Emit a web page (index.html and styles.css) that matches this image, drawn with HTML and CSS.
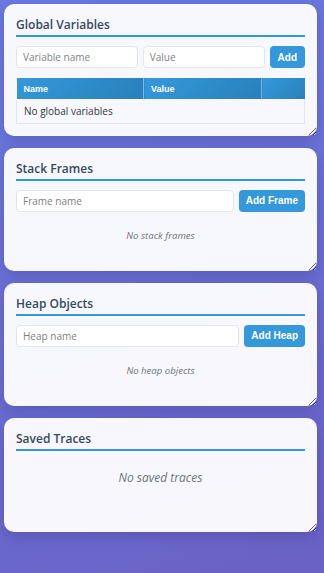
FILE: index.html
```html
<!DOCTYPE html>
<html>
<head>
<meta charset="utf-8">
<link rel="stylesheet" href="styles.css">
</head>
<body>
<main class="panels">
  <section class="card card-globals">
    <h3 class="card-title">Global Variables</h3>
    <div class="form-row">
      <input class="field field-half" type="text" placeholder="Variable name">
      <input class="field field-half" type="text" placeholder="Value">
      <button class="btn btn-small">Add</button>
    </div>
    <table class="vars">
      <thead>
        <tr><th class="col-name">Name</th><th class="col-value">Value</th><th class="col-act"></th></tr>
      </thead>
      <tbody>
        <tr><td colspan="3">No global variables</td></tr>
      </tbody>
    </table>
  </section>

  <section class="card">
    <h3 class="card-title">Stack Frames</h3>
    <div class="form-row">
      <input class="field" type="text" placeholder="Frame name">
      <button class="btn">Add Frame</button>
    </div>
    <div class="empty">No stack frames</div>
  </section>

  <section class="card">
    <h3 class="card-title">Heap Objects</h3>
    <div class="form-row">
      <input class="field" type="text" placeholder="Heap name">
      <button class="btn">Add Heap</button>
    </div>
    <div class="empty">No heap objects</div>
  </section>

  <section class="card card-traces">
    <h3 class="card-title">Saved Traces</h3>
    <div class="empty empty-large">No saved traces</div>
  </section>
</main>
</body>
</html>
```
FILE: styles.css
```css
* { box-sizing: border-box; }
html, body { margin: 0; padding: 0; }
body {
  min-height: 100vh;
  background: linear-gradient(160deg, #6b7be3 0%, #6a6ed2 55%, #6a62c4 100%);
  font-family: "Open Sans", "Liberation Sans", sans-serif;
  color: #2c3e50;
}
.panels {
  display: flex;
  flex-direction: column;
  gap: 12px;
  padding: 4px 7px 4px 4px;
}
.card {
  background: rgba(255, 255, 255, 0.95);
  border-radius: 10px;
  padding: 12px;
  box-shadow: 0 4px 14px rgba(40, 30, 110, 0.25);
  resize: vertical;
  overflow: auto;
}
.card-title {
  margin: 0 0 9px;
  font-size: 12px;
  font-weight: 600;
  line-height: 18px;
  padding-bottom: 1px;
  border-bottom: 2px solid #3498db;
  color: #34495e;
}
.form-row {
  display: flex;
  gap: 5px;
  align-items: stretch;
}
.field {
  flex: 1;
  min-width: 0;
  height: 22px;
  border: 1px solid #e2e5ea;
  border-radius: 4px;
  background: #fff;
  padding: 0 6px;
  font-family: "Open Sans", sans-serif;
  font-size: 10px;
  color: #333;
}
.field::placeholder { color: #7c7f84; }
.btn {
  flex: none;
  height: 22px;
  border: none;
  border-radius: 4px;
  background: #3498db;
  color: #fff;
  font-family: "Liberation Sans", Arial, sans-serif;
  font-weight: bold;
  font-size: 10px;
  padding: 0 7px;
}
.btn-small { padding: 0 8px; }
.vars {
  width: 100%;
  margin-top: 10px;
  border-collapse: collapse;
  font-size: 10px;
}
.vars th {
  height: 21px;
  text-align: left;
  padding: 0 7px;
  color: #fff;
  font-family: "Liberation Sans", Arial, sans-serif;
  font-weight: bold;
  font-size: 9px;
  background: linear-gradient(135deg, #3498db, #2980b9);
  border-right: 1px solid rgba(255,255,255,0.35);
}
.vars th:last-child { border-right: none; }
.col-name { width: 127px; }
.col-value { width: 118px; }
.vars td {
  height: 24px;
  padding: 0 7px;
  border: 1px solid #e3e6ea;
  border-top: none;
  color: #333;
}
.empty {
  text-align: center;
  font-style: italic;
  color: #6f7378;
  font-size: 9.6px;
  line-height: 14px;
  padding: 17px 0 16px;
}
.empty-large {
  font-size: 12px;
  line-height: 18px;
  padding: 9px 0 33px;
}
```
